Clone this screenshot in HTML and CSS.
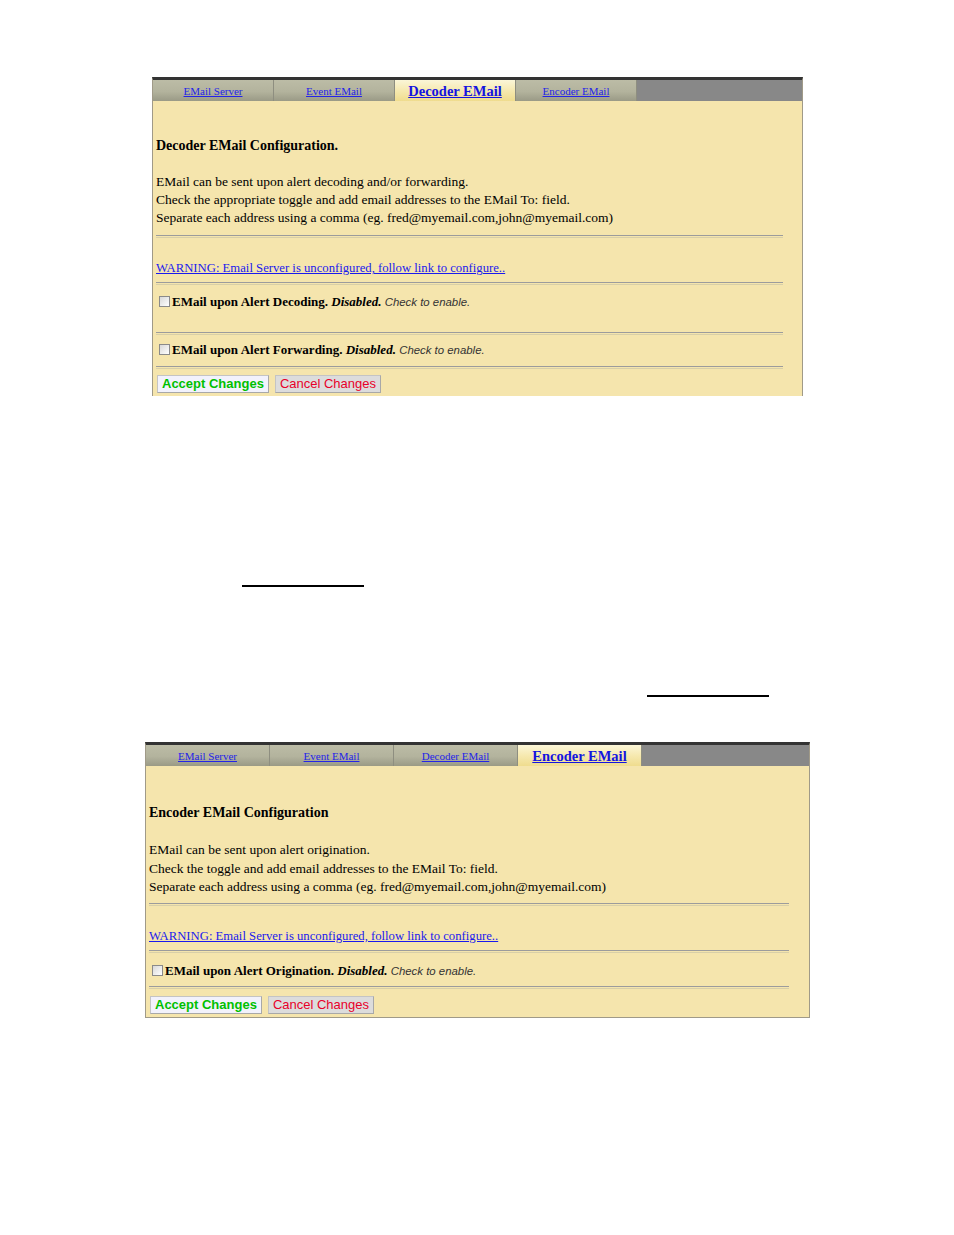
FILE: index.html
```html
<!DOCTYPE html>
<html>
<head>
<meta charset="utf-8">
<title>EMail Configuration</title>
<link rel="stylesheet" href="styles.css">
</head>
<body>
<div class="panel panel-dec">
  <div class="tabbar">
    <div class="tab"><a href="#">EMail Server</a></div>
    <div class="tab"><a href="#">Event EMail</a></div>
    <div class="tab active"><a href="#">Decoder EMail</a></div>
    <div class="tab"><a href="#">Encoder EMail</a></div>
  </div>
  <div class="content">
    <div class="heading">Decoder EMail Configuration.</div>
    <p class="desc">EMail can be sent upon alert decoding and/or forwarding.<br>Check the appropriate toggle and add email addresses to the EMail To: field.<br>Separate each address using a comma (eg. fred@myemail.com,john@myemail.com)</p>
    <hr class="rule r1">
    <div class="warn"><a href="#">WARNING: Email Server is unconfigured, follow link to configure..</a></div>
    <hr class="rule r2">
    <div class="opt opt-a"><span class="cb"></span><b>EMail upon Alert Decoding.</b> <b><i>Disabled.</i></b> <i class="hint">Check to enable.</i></div>
    <hr class="rule r3">
    <div class="opt opt-b"><span class="cb"></span><b>EMail upon Alert Forwarding.</b> <b><i>Disabled.</i></b> <i class="hint">Check to enable.</i></div>
    <hr class="rule r4">
    <div class="buttons">
      <button class="btn accept">Accept Changes</button>
      <button class="btn cancel">Cancel Changes</button>
    </div>
  </div>
</div>

<div class="blank blank-1"></div>
<div class="blank blank-2"></div>

<div class="panel panel-enc">
  <div class="tabbar">
    <div class="tab"><a href="#">EMail Server</a></div>
    <div class="tab"><a href="#">Event EMail</a></div>
    <div class="tab"><a href="#">Decoder EMail</a></div>
    <div class="tab active"><a href="#">Encoder EMail</a></div>
  </div>
  <div class="content">
    <div class="heading">Encoder EMail Configuration</div>
    <p class="desc">EMail can be sent upon alert origination.<br>Check the toggle and add email addresses to the EMail To: field.<br>Separate each address using a comma (eg. fred@myemail.com,john@myemail.com)</p>
    <hr class="rule r1">
    <div class="warn"><a href="#">WARNING: Email Server is unconfigured, follow link to configure..</a></div>
    <hr class="rule r2">
    <div class="opt opt-a"><span class="cb"></span><b>EMail upon Alert Origination.</b> <b><i>Disabled.</i></b> <i class="hint">Check to enable.</i></div>
    <hr class="rule r4">
    <div class="buttons">
      <button class="btn accept">Accept Changes</button>
      <button class="btn cancel">Cancel Changes</button>
    </div>
  </div>
</div>
</body>
</html>
```
FILE: styles.css
```css
html, body {
  margin: 0;
  padding: 0;
  background: #ffffff;
}
body {
  font-family: "Liberation Serif", "Times New Roman", serif;
  font-size: 13px;
  color: #000;
}
a { color: #1a1aee; }

.panel {
  background: #f5e5ad;
  border-top: 3px solid #333333;
  border-left: 1px solid #a09a88;
  border-right: 1px solid #a09a88;
  box-sizing: border-box;
}
.panel-dec {
  margin: 77px 0 0 152px;
  width: 651px;
  height: 319px;
}
.panel-enc {
  margin: 0 0 0 145px;
  width: 665px;
  border-bottom: 1px solid #a09a88;
  padding-bottom: 3px;
}

.tabbar {
  display: flex;
  height: 21px;
  background: #888888;
}
.tab {
  box-sizing: border-box;
  height: 21px;
  border-right: 1px solid #8e8e80;
  background: linear-gradient(to bottom, #bcbca6 0%, #b3b39d 55%, #9a9a86 100%);
  display: flex;
  align-items: center;
  justify-content: center;
  font-size: 11px;
}
.panel-dec .tab { width: 121px; }
.panel-enc .tab { width: 124px; }
.tab a { color: #2424e8; }
.tab.active {
  background: linear-gradient(to bottom, #fbf6d8 0%, #f6e9b0 50%, #efdc8e 100%);
  font-size: 14.5px;
  font-weight: bold;
  padding-top: 1px;
}
.tab.active a { color: #1414e0; }

.content {
  padding: 36px 0 0 3px;
}
.panel-enc .content { padding-top: 38px; }
.heading {
  font-weight: bold;
  font-size: 14px;
  line-height: 18px;
}
.desc {
  margin: 18px 0 0 0;
  line-height: 18px;
  font-size: 13.5px;
}
.panel-enc .desc { margin-top: 19px; line-height: 18.5px; }

.rule {
  width: 97%;
  margin: 0;
  border: 0;
  height: 1px;
  border-top: 1px solid #9c9c9c;
  border-bottom: 1px solid #d8cfa8;
  margin-left: 0;
}
.r1 { margin-top: 8px; }
.panel-enc .r1 { margin-top: 6px; }
.warn {
  margin-top: 21px;
  line-height: 18px;
  font-size: 12.7px;
}
.r2 { margin-top: 5px; }
.opt {
  margin-top: 8px;
  line-height: 18px;
  font-size: 13px;
}
.panel-enc .opt-a { margin-top: 9px; }
.opt b { font-weight: bold; }
.hint {
  font-family: "Liberation Sans", Arial, sans-serif;
  font-size: 11.4px;
  font-style: italic;
  color: #333;
}
.cb {
  display: inline-block;
  vertical-align: -1px;
  box-sizing: border-box;
  width: 11px;
  height: 11px;
  border: 1px solid #8a8a8a;
  background: linear-gradient(135deg, #d8d8d8, #ffffff);
  margin: 0 2px 0 3px;
}
.r3 { margin-top: 21px; }
.opt-b { margin-top: 6px; }
.panel-dec .r4 { margin-top: 7px; }
.panel-enc .r4 { margin-top: 6px; }

.buttons {
  display: flex;
  gap: 6px;
  margin-top: 6px;
  padding-left: 1px;
}
.panel-enc .buttons { margin-top: 7px; }
.btn {
  font-family: "Liberation Sans", Arial, sans-serif;
  font-size: 13px;
  height: 18px;
  padding: 0 4px;
  line-height: 16px;
  border: 1px solid #c4c4c4;
  border-right-color: #a8a8a8;
  border-bottom-color: #a8a8a8;
}
.accept {
  background: #f2f2fc;
  color: #00c000;
  font-weight: bold;
}
.cancel {
  background: #dcdcdc;
  color: #e8002a;
}

.blank {
  height: 2px;
  background: #000;
  width: 122px;
}
.blank-1 { margin: 189px 0 0 242px; }
.blank-2 { margin: 108px 0 0 647px; }
.blank-2 + .panel-enc { margin-top: 45px; }
```
